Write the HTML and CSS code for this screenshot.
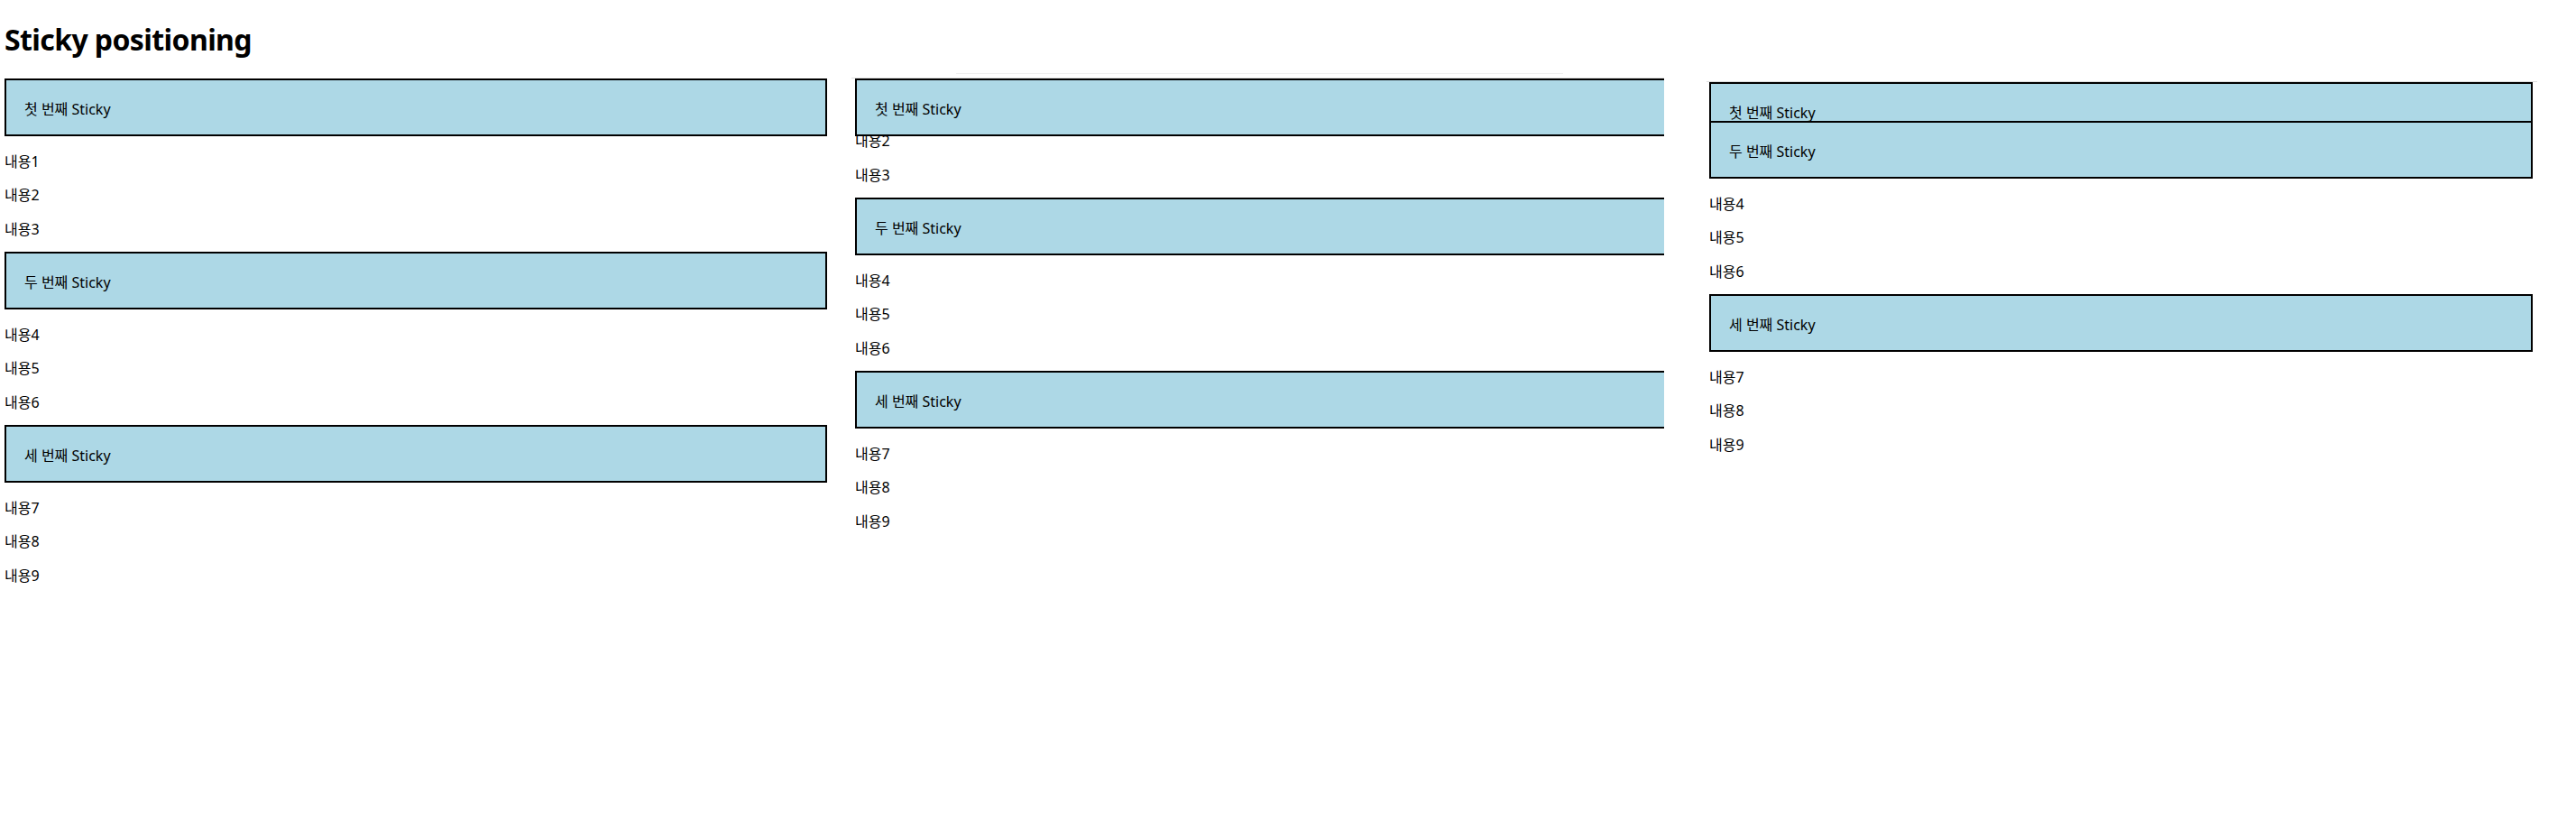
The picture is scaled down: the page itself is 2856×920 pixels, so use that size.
FILE: index.html
```html
<!DOCTYPE html>
<html lang="ko">
<head>
<meta charset="utf-8">
<title>Sticky positioning</title>
<link rel="stylesheet" href="styles.css">
</head>
<body>
<h1 class="title">Sticky positioning</h1>
<div class="demos">
  <div class="demo demo-a">
    <div class="content">
      <div class="sticky">첫 번째 Sticky</div>
      <p class="item">내용1</p>
      <p class="item">내용2</p>
      <p class="item">내용3</p>
      <div class="sticky">두 번째 Sticky</div>
      <p class="item">내용4</p>
      <p class="item">내용5</p>
      <p class="item">내용6</p>
      <div class="sticky">세 번째 Sticky</div>
      <p class="item">내용7</p>
      <p class="item">내용8</p>
      <p class="item">내용9</p>
    </div>
  </div>
  <div class="demo demo-scroll demo-b">
    <div class="content">
      <div class="sticky">첫 번째 Sticky</div>
      <p class="item">내용1</p>
      <p class="item">내용2</p>
      <p class="item">내용3</p>
      <div class="sticky">두 번째 Sticky</div>
      <p class="item">내용4</p>
      <p class="item">내용5</p>
      <p class="item">내용6</p>
      <div class="sticky">세 번째 Sticky</div>
      <p class="item">내용7</p>
      <p class="item">내용8</p>
      <p class="item">내용9</p>
    </div>
  </div>
  <div class="demo demo-scroll demo-c">
    <div class="content">
      <div class="sticky">첫 번째 Sticky</div>
      <p class="item">내용1</p>
      <p class="item">내용2</p>
      <p class="item">내용3</p>
      <div class="sticky">두 번째 Sticky</div>
      <p class="item">내용4</p>
      <p class="item">내용5</p>
      <p class="item">내용6</p>
      <div class="sticky">세 번째 Sticky</div>
      <p class="item">내용7</p>
      <p class="item">내용8</p>
      <p class="item">내용9</p>
    </div>
  </div>
</div>
<script src="script.js"></script>
</body>
</html>
```

FILE: styles.css
```css
html, body {
  background: #fff;
}

body {
  margin: 0;
  padding: 23px 5px 0;
  font-family: "Noto Sans", "Noto Sans CJK KR", sans-serif;
  color: #000;
}

.title {
  margin: 0 0 21px;
  font-size: 32px;
  line-height: 42px;
  font-weight: 700;
  letter-spacing: -0.6px;
}

.demos {
  position: relative;
  display: flex;
  align-items: flex-start;
}

/* faint scroll indicator above the middle pane */
.demos::before {
  content: "";
  position: absolute;
  left: 1055px;
  top: -5px;
  width: 673px;
  height: 1px;
  background: #eeeeee;
}

.demo {
  flex: none;
}

.content {
  display: flow-root;
}

.demo-a {
  width: 912px;
  margin-top: 1px;
}

.demo-scroll {
  overflow: hidden;
  border-top: 1px solid #dedede;
}

.demo-scroll .content {
  padding-bottom: 240px;
}

.demo-b {
  width: 897px;
  height: 560px;
  margin-left: 27px;
  padding-left: 4px;
}

.demo-b .content {
  width: 912px;
}

.demo-c {
  width: 913px;
  height: 480px;
  margin-top: 4px;
  margin-left: 47px;
  padding: 0 5px 0 3px;
}

.sticky {
  position: sticky;
  top: 0;
  border: 2px solid #000;
  background: #add8e6;
  padding: 22px 20px 18px;
  font-size: 16px;
  line-height: 20px;
}

.item {
  margin: 16px 0;
  padding-top: 3px;
  font-size: 16px;
  line-height: 18.33px;
}
```

FILE: script.js
```js
document.querySelector('.demo-b').scrollTop = 60;
document.querySelector('.demo-c').scrollTop = 149;
```
